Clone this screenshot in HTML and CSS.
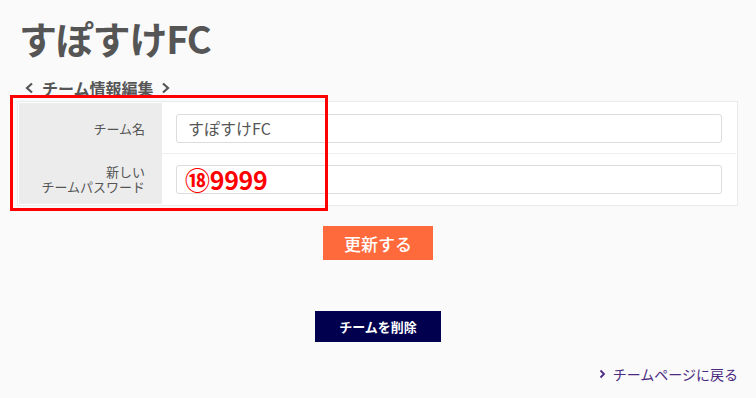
FILE: index.html
```html
<!DOCTYPE html>
<html lang="ja">
<head>
<meta charset="utf-8">
<link rel="stylesheet" href="styles.css">
</head>
<body>
<div class="page">
  <h1 class="title">すぽすけFC</h1>
  <h2 class="subhead"><svg class="chev left" width="9" height="12" viewBox="0 0 9 12"><polyline points="7,1.5 2,6 7,10.5" fill="none" stroke="#555" stroke-width="2.2"/></svg>チーム情報編集<svg class="chev right" width="9" height="12" viewBox="0 0 9 12"><polyline points="2,1.5 7,6 2,10.5" fill="none" stroke="#555" stroke-width="2.2"/></svg></h2>
  <div class="form-wrap">
    <div class="table">
      <div class="row">
        <div class="label">チーム名</div>
        <div class="field"><div class="input">すぽすけFC</div></div>
      </div>
      <div class="row">
        <div class="label"><span>新しい</span><span>チームパスワード</span></div>
        <div class="field"><div class="input pw">⑱9999</div></div>
      </div>
    </div>
    <div class="highlight"></div>
  </div>
  <div class="actions">
    <button class="btn update">更新する</button>
    <button class="btn delete">チームを削除</button>
  </div>
  <div class="back"><a href="#"><svg class="arrow" width="7" height="10" viewBox="0 0 7 10"><polyline points="1.5,1.5 5,5 1.5,8.5" fill="none" stroke="#4b2a80" stroke-width="1.8"/></svg>チームページに戻る</a></div>
</div>
</body>
</html>
```
FILE: styles.css
```css
html, body {
  margin: 0;
  padding: 0;
  background: #fafafa;
}
body {
  font-family: "Noto Sans CJK JP", "Noto Sans", sans-serif;
  color: #555;
}
.page {
  width: 756px;
  height: 398px;
  padding: 0 18px 0 16px;
  box-sizing: border-box;
}
.title {
  margin: 0;
  padding-top: 17px;
  padding-left: 3px;
  font-size: 38px;
  line-height: 42px;
  font-weight: 700;
  color: #555;
  letter-spacing: -1.2px;
}
.subhead {
  margin: 20px 0 0 9px;
  font-size: 16px;
  line-height: 18px;
  font-weight: 700;
  color: #555;
  display: flex;
  align-items: center;
}
.chev {
  display: block;
}
.chev.left { margin-right: 8px; }
.chev.right { margin-left: 7px; }
.form-wrap {
  position: relative;
  margin-top: 4px;
}
.table {
  margin-left: 1px;
  border: 1px solid #eaeaea;
  background: #fff;
  padding: 1px;
}
.row {
  display: flex;
  height: 50px;
}
.row + .row {
  border-top: 1px solid #eeeeee;
}
.label {
  width: 143px;
  flex: none;
  background: #ececec;
  text-align: right;
  padding-right: 17px;
  box-sizing: border-box;
  font-size: 13px;
  line-height: 15px;
  color: #555;
  display: flex;
  flex-direction: column;
  justify-content: center;
  align-items: flex-end;
}
.label span { display: block; line-height: 15px; }
.field {
  flex: 1;
  display: flex;
  align-items: center;
  padding: 0 14px 0 14px;
}
.input {
  flex: 1;
  height: 29px;
  box-sizing: border-box;
  border: 1px solid #dcdcdc;
  border-radius: 3px;
  background: #fff;
  padding-left: 11px;
  font-size: 16px;
  line-height: 27px;
  color: #555;
}
.input.pw {
  padding-left: 8px;
  color: #f00;
  font-weight: 700;
  font-size: 25px;
  line-height: 27px;
  letter-spacing: -0.3px;
}
.highlight {
  position: absolute;
  left: -6px;
  top: -6px;
  width: 318px;
  height: 116px;
  border: 3px solid #ff0000;
  box-sizing: border-box;
  pointer-events: none;
}
.actions {
  display: flex;
  flex-direction: column;
  align-items: center;
  padding-left: 2px;
}
.btn {
  border: none;
  color: #fff;
  font-family: "Noto Sans CJK JP", sans-serif;
  padding: 0;
}
.update {
  margin-top: 20px;
  width: 110px;
  height: 34px;
  background: #ff6a3d;
  font-size: 17px;
  font-weight: 500;
}
.delete {
  margin-top: 51px;
  width: 126px;
  height: 31px;
  background: #00004f;
  font-size: 13px;
  font-weight: 700;
}
.back {
  margin-top: 18px;
  text-align: right;
}
.back a {
  color: #4b2a80;
  text-decoration: none;
  font-size: 14px;
  line-height: 18px;
  display: inline-flex;
  align-items: center;
}
.arrow {
  display: block;
  margin-right: 7px;
}
```
